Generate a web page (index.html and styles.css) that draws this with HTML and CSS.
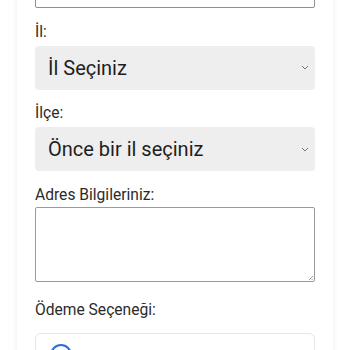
FILE: index.html
```html
<!DOCTYPE html>
<html lang="tr">
<head>
<meta charset="utf-8">
<link rel="stylesheet" href="styles.css">
</head>
<body>
<div class="page">
  <div class="card">
    <div class="group">
      <div class="text-input"></div>
    </div>
    <div class="group">
      <div class="label">İl:</div>
      <div class="select"><span>İl Seçiniz</span>
        <svg class="chev" width="8" height="5" viewBox="0 0 8 5"><path d="M1 1 L4 4 L7 1" fill="none" stroke="#777" stroke-width="1"/></svg>
      </div>
    </div>
    <div class="group">
      <div class="label">İlçe:</div>
      <div class="select"><span>Önce bir il seçiniz</span>
        <svg class="chev" width="8" height="5" viewBox="0 0 8 5"><path d="M1 1 L4 4 L7 1" fill="none" stroke="#777" stroke-width="1"/></svg>
      </div>
    </div>
    <div class="group address">
      <div class="label">Adres Bilgileriniz:</div>
      <div class="textarea">
        <svg class="grip" width="6" height="6" viewBox="0 0 6 6"><path d="M5 1 L1 5 M5 3.5 L3.5 5" stroke="#888" stroke-width="0.8"/></svg>
      </div>
    </div>
    <div class="group pay">
      <div class="label">Ödeme Seçeneği:</div>
      <div class="option">
        <span class="radio"></span>
      </div>
    </div>
  </div>
</div>
</body>
</html>
```
FILE: styles.css
```css
html, body {
  margin: 0;
  padding: 0;
  background: #ffffff;
  overflow: hidden;
}
body {
  font-family: Roboto, "Noto Sans", Arial, sans-serif;
  color: #212529;
}
.page {
  padding: 0 17px;
}
.card {
  background: #fff;
  margin-top: -38.7px;
  padding: 0 18px 40px;
  box-shadow: 0 0 6px rgba(0, 0, 0, 0.08);
}
.group {
  margin-bottom: 11.5px;
}
.group.address {
  margin-bottom: 15.5px;
}
.text-input {
  height: 47px;
  border: 1px solid #8f8f8f;
  border-radius: 2px;
  box-sizing: border-box;
}
.label {
  font-size: 15.6px;
  line-height: 24px;
  margin-bottom: 2px;
  color: #2b2b2b;
}
.address .label {
  margin-bottom: 0.5px;
}
.pay .label {
  margin-bottom: 11px;
}
.select {
  height: 44px;
  background: #eeeeee;
  border-radius: 4px;
  display: flex;
  align-items: center;
  justify-content: space-between;
  padding: 0 6px 0 13px;
  font-size: 20px;
  color: #1e1e1e;
}
.chev {
  display: block;
}
.textarea {
  height: 75px;
  border: 1px solid #9a9a9a;
  border-radius: 2px;
  box-sizing: border-box;
  position: relative;
}
.grip {
  position: absolute;
  right: 0;
  bottom: 0;
}
.option {
  height: 50px;
  border: 1px solid #e6e6e6;
  border-radius: 6px;
  padding: 10px 14px;
  box-sizing: border-box;
}
.radio {
  display: block;
  width: 18px;
  height: 18px;
  border: 2px solid #2a6fdb;
  border-radius: 50%;
}
```
